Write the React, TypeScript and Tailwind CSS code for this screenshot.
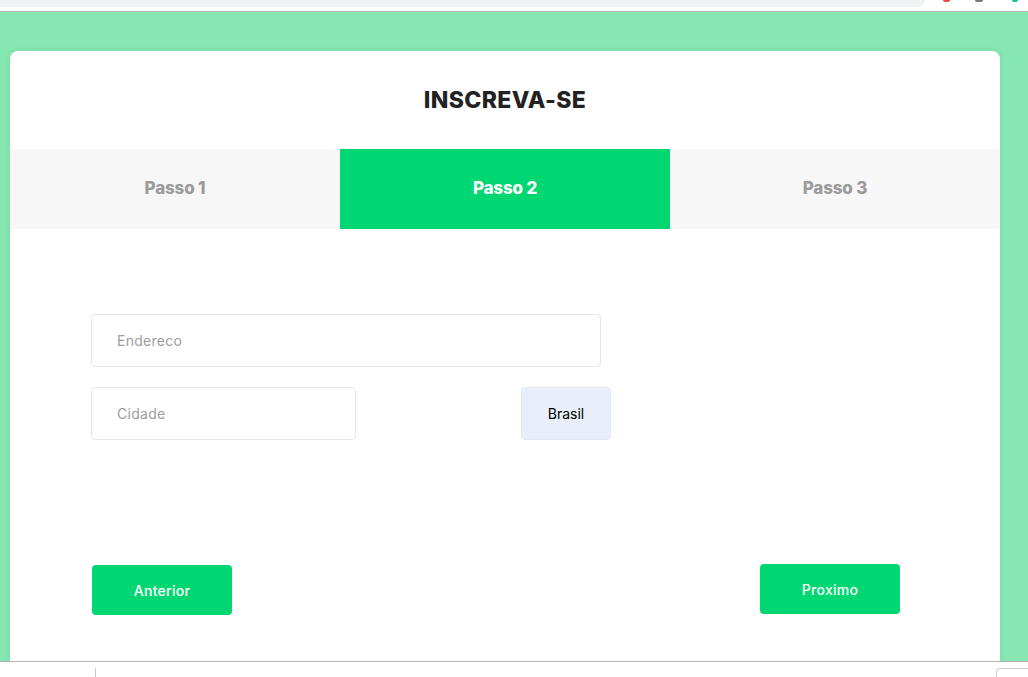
import { useState } from "react";

const steps = ["Passo 1", "Passo 2", "Passo 3"];

export default function App() {
  const [active, setActive] = useState(1);

  return (
    <div className="w-[1028px] h-[677px] overflow-hidden bg-white font-['Inter',sans-serif]">
      {/* browser top strip */}
      <div className="flex items-start h-[12px] border-b border-[#b4b4b4] bg-white">
        <div className="h-[7px] w-[925px] rounded-br-lg bg-[#f1f2f4]" />
        <span className="ml-[18px] h-[2px] w-[7px] rounded-b bg-[#f0483e]" />
        <span className="ml-[25px] h-[2px] w-[8px] rounded-b bg-[#777]" />
        <span className="ml-[29px] h-[2px] w-[6px] rounded-b bg-[#12c39a]" />
      </div>

      <main className="h-[649px] overflow-hidden bg-[#86e7b2] pt-[39px] pl-[10px]">
        <div className="w-[990px] h-[700px] rounded-lg bg-white shadow-[0_0_6px_rgba(0,0,0,0.08)] overflow-hidden">
          <h1 className="h-[98px] flex items-center justify-center text-[23px] font-extrabold text-[#222] tracking-[0.015em]">
            INSCREVA-SE
          </h1>

          <div className="grid grid-cols-3 h-[80px] bg-[#f7f7f7]">
            {steps.map((s, i) => (
              <button
                key={s}
                onClick={() => setActive(i)}
                className={
                  i === active
                    ? "flex items-center justify-center bg-[#00d772] text-white text-[17px] font-extrabold tracking-[-0.01em]"
                    : "flex items-center justify-center text-[#9b9b9b] text-[17px] font-extrabold tracking-[-0.01em]"
                }
              >
                {s}
              </button>
            ))}
          </div>

          <form className="pl-[81px] pt-[85px]" onSubmit={(e) => e.preventDefault()}>
            <input
              placeholder="Endereco"
              className="block w-[510px] h-[53px] rounded-[4px] border border-[#e6e6e6] pl-[25px] text-[14px] tracking-[0.02em] text-[#333] placeholder:text-[#9d9d9d] outline-none"
            />
            <div className="flex mt-[20px]">
              <input
                placeholder="Cidade"
                className="block w-[265px] h-[53px] rounded-[4px] border border-[#e6e6e6] pl-[25px] text-[14px] tracking-[0.02em] text-[#333] placeholder:text-[#9d9d9d] outline-none"
              />
              <button
                type="button"
                className="ml-[165px] w-[90px] h-[53px] rounded-[4px] border border-[#e3e8f0] bg-[#e8effa] text-[14px] text-black"
              >
                Brasil
              </button>
            </div>

            <div className="flex w-[809px] justify-between mt-[124px] pl-px">
              <button className="mt-[1px] w-[140px] h-[50px] rounded-[4px] bg-[#00d772] text-white text-[14px] font-medium tracking-[0.02em]">
                Anterior
              </button>
              <button className="w-[140px] h-[50px] rounded-[4px] bg-[#00d772] text-white text-[14px] font-medium tracking-[0.02em]">
                Proximo
              </button>
            </div>
          </form>
        </div>
      </main>

      {/* browser bottom strip */}
      <div className="flex items-end h-[16px] border-t border-[#b4b4b4] bg-white">
        <span className="ml-[95px] h-[9px] w-px bg-[#c8c8c8]" />
        <span className="ml-[900px] h-[9px] flex-1 rounded-tl-[4px] border-l border-t border-[#d0d0d0]" />
      </div>
    </div>
  );
}
